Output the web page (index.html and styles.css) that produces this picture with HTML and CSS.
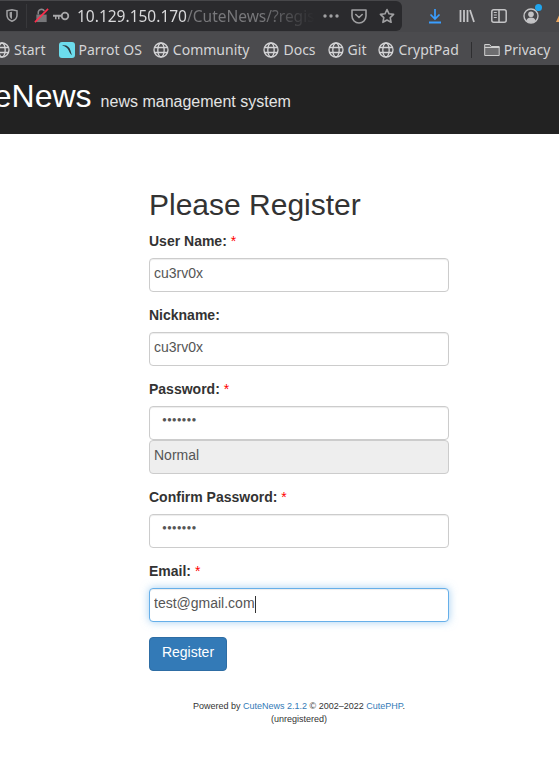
FILE: index.html
```html
<!DOCTYPE html>
<html lang="en">
<head>
    <meta charset="UTF-8">
    <meta name="viewport" content="width=device-width, initial-scale=1.0">
    <title>CuteNews - Register</title>
    <link rel="stylesheet" href="styles.css">
</head>
<body>
    <svg class="sprites" width="0" height="0">
        <symbol id="globe" viewBox="0 0 16 16">
            <g fill="none" stroke="currentColor" stroke-width="1.3">
                <circle cx="8" cy="8" r="7"/>
                <ellipse cx="8" cy="8" rx="3.2" ry="7"/>
                <path d="M1.5 5.5h13M1.5 10.5h13"/>
            </g>
        </symbol>
    </svg>

    <div class="nav-toolbar">
        <div class="url-field">
            <svg class="icon shield" viewBox="0 0 12 13"><path d="M1 1.8 6 .8l5 1v4.4c0 3-2.2 5-5 6-2.8-1-5-3-5-6z" fill="none" stroke="currentColor" stroke-width="1.5"/><path d="M3.6 3.2 6 2.7v7.4C4.400 9.300 3.600 8 3.600 6.200z" fill="currentColor"/></svg>
            <span class="url-divider"></span>
            <svg class="icon lock" viewBox="0 0 16 16"><path d="M4.500 7V5a3.500 3.500 0 0 1 6.500-1.800" fill="none" stroke="#8a8a8c" stroke-width="1.600"/><path d="M2.500 7h11v8h-11z" fill="#77777a"/><path d="M1 15 15 1" stroke="#ff2e4c" stroke-width="1.800"/></svg>
            <svg class="icon key" viewBox="0 0 17 10"><circle cx="12" cy="5" r="3.300" fill="none" stroke="currentColor" stroke-width="1.800"/><path d="M0 3.800h9v2H6.500v2.400H5V5.800H3.500v2.400H2V5.800H0z" fill="currentColor"/></svg>
            <span class="url-text"><span class="url-host">10.129.150.170</span>/CuteNews/?register</span>
            <svg class="icon dots" viewBox="0 0 16 4"><circle cx="2" cy="2" r="1.700"/><circle cx="8" cy="2" r="1.700"/><circle cx="14" cy="2" r="1.700"/></svg>
            <svg class="icon pocket" viewBox="0 0 16 16"><path d="M1 2h14v6a7 7 0 0 1-14 0z" fill="none" stroke="currentColor" stroke-width="1.600" stroke-linejoin="round"/><path d="m4.800 6.500 3.200 3 3.200-3" fill="none" stroke="currentColor" stroke-width="1.600" stroke-linecap="round"/></svg>
            <svg class="icon star" viewBox="0 0 16 16"><path d="m8 1.500 2 4.300 4.600.6-3.400 3.200.9 4.700L8 12l-4.100 2.300.9-4.700L1.400 6.400 6 5.800z" fill="none" stroke="currentColor" stroke-width="1.600" stroke-linejoin="round"/></svg>
        </div>
        <div class="toolbar-buttons">
            <svg class="icon download" viewBox="0 0 14 16"><path d="M7 1v9.500M2.500 6.500 7 11l4.500-4.500" fill="none" stroke="currentColor" stroke-width="1.700"/><path d="M1 14.500h12" stroke="currentColor" stroke-width="2"/></svg>
            <svg class="icon library" viewBox="0 0 16 14"><path d="M1.500 1v12M5 1v12M8.500 1v12M11 1l4 12" fill="none" stroke="currentColor" stroke-width="1.800"/></svg>
            <svg class="icon sidebar" viewBox="0 0 16 14"><rect x=".8" y=".8" width="14.400" height="12.400" rx="2" fill="none" stroke="currentColor" stroke-width="1.500"/><path d="M8 1v12" stroke="currentColor" stroke-width="1.500"/><path d="M2.800 3.500h3M2.800 6h3M2.800 8.500h3" stroke="currentColor" stroke-width="1"/></svg>
            <span class="account">
                <svg class="icon" viewBox="0 0 16 16"><circle cx="8" cy="8" r="7" fill="none" stroke="currentColor" stroke-width="1.400"/><circle cx="8" cy="6.300" r="2.800" fill="currentColor"/><path d="M3.200 13c.6-2.500 2.500-3.500 4.800-3.500s4.200 1 4.800 3.500a7 7 0 0 1-9.600 0z" fill="currentColor"/></svg>
                <span class="account-dot"></span>
            </span>
            <svg class="icon extension" viewBox="0 0 16 16"><path d="M1 14 6 3l6 5-5 6z" fill="#e8a45c"/></svg>
        </div>
    </div>

    <div class="bookmarks">
        <a class="bookmark bookmark-start"><svg class="icon"><use href="#globe"/></svg>Start</a>
        <a class="bookmark bookmark-parrot">
            <svg class="icon" viewBox="0 0 16 16"><rect width="16" height="16" rx="3" fill="#6cdcec"/><path d="M3 3.500c4-1 7.500 1 8.500 5 .4 1.500.8 3 1.500 4.800-1.500-1.300-2.500-3-3.200-4.600C9 6 6.500 4.500 3 3.500z" fill="#2b3a42"/></svg>
            Parrot OS
        </a>
        <a class="bookmark bookmark-community"><svg class="icon"><use href="#globe"/></svg>Community</a>
        <a class="bookmark"><svg class="icon"><use href="#globe"/></svg>Docs</a>
        <a class="bookmark"><svg class="icon"><use href="#globe"/></svg>Git</a>
        <a class="bookmark"><svg class="icon"><use href="#globe"/></svg>CryptPad</a>
        <span class="bookmark-sep"></span>
        <a class="bookmark">
            <svg class="icon" viewBox="0 0 16 16"><path d="M.7 13.500V2.500h5l1.500 2h8v9z" fill="#6e6e70" stroke="#cfcfcf" stroke-width="1"/><path d="M.7 5.500h14.600" stroke="#cfcfcf" stroke-width="1"/></svg>
            Privacy
        </a>
    </div>

    <header class="navbar">
        <span class="brand">CuteNews</span>
        <span class="brand-sub">news management system</span>
    </header>

    <main class="register">
        <h2>Please Register</h2>
        <form>
            <div class="form-group">
                <label for="regusername">User Name: <span class="required">*</span></label>
                <input class="form-control" id="regusername" type="text" value="cu3rv0x">
            </div>
            <div class="form-group">
                <label for="regnickname">Nickname:</label>
                <input class="form-control" id="regnickname" type="text" value="cu3rv0x">
            </div>
            <div class="form-group">
                <label for="regpassword">Password: <span class="required">*</span></label>
                <input class="form-control password" id="regpassword" type="password" value="1234567">
                <div class="pass-strength">Normal</div>
            </div>
            <div class="form-group">
                <label for="confirm">Confirm Password: <span class="required">*</span></label>
                <input class="form-control password" id="confirm" type="password" value="1234567">
            </div>
            <div class="form-group">
                <label for="regemail">Email: <span class="required">*</span></label>
                <div class="caret-field">
                    <input class="form-control focused" id="regemail" type="text" value="test@gmail.com">
                    <span class="caret"></span>
                </div>
            </div>
            <button class="btn-register" type="button">Register</button>
        </form>
        <footer class="powered">
            Powered by <a>CuteNews 2.1.2</a> © 2002–2022 <a>CutePHP</a>.<br>
            <span>(unregistered)</span>
        </footer>
    </main>
</body>
</html>
```

FILE: styles.css
```css
* {
    box-sizing: border-box;
}

html, body {
    height: 100%;
}

body {
    margin: 0;
    background: #fff;
    color: #333;
    font-family: "Liberation Sans", Arial, sans-serif;
    font-size: 14px;
    line-height: 20px;
    overflow: hidden;
}

.sprites {
    display: block;
    height: 0;
}

.icon {
    display: block;
    flex: none;
    width: 16px;
    height: 16px;
}

/* Browser chrome */
.nav-toolbar {
    display: flex;
    align-items: center;
    height: 32px;
    padding-bottom: 1px;
    background: #47474a;
    color: #c4c4c6;
}

.url-field {
    display: flex;
    align-items: center;
    flex: none;
    width: 402px;
    height: 30px;
    padding-left: 6px;
    background: #2a2a2d;
    border-radius: 0 6px 6px 0;
    color: #a0a0a2;
    font-family: "Noto Sans", sans-serif;
}

.shield {
    width: 12px;
    height: 13px;
}

.url-divider {
    width: 1px;
    height: 24px;
    margin: 0 7px 0 8px;
    background: #38383b;
}

.lock {
    width: 15px;
    height: 15px;
}

.key {
    width: 17px;
    height: 10px;
    margin-left: 4px;
    color: #a8a8aa;
}

.url-text {
    width: 238px;
    margin-left: 7px;
    overflow: hidden;
    white-space: nowrap;
    font-size: 15.5px;
    color: #77777a;
    -webkit-mask-image: linear-gradient(to right, #000 78%, transparent 100%);
    mask-image: linear-gradient(to right, #000 78%, transparent 100%);
}

.url-host {
    color: #d8d8da;
}

.dots {
    width: 16px;
    height: 4px;
    margin-left: 8px;
    fill: #a0a0a2;
}

.pocket {
    margin-left: 12px;
}

.star {
    margin-left: 12px;
}

.toolbar-buttons {
    display: flex;
    align-items: center;
    gap: 16px;
    flex: none;
    margin-left: 26px;
}

.download {
    width: 14px;
    margin-right: 1px;
    color: #3a9eff;
}

.library,
.sidebar {
    width: 16px;
    height: 14px;
}

.account {
    position: relative;
}

.account-dot {
    position: absolute;
    top: -4px;
    right: -3px;
    width: 7px;
    height: 7px;
    border-radius: 50%;
    background: #1fa5ee;
}

.bookmarks {
    display: flex;
    align-items: center;
    gap: 12px;
    height: 33px;
    padding-top: 2px;
    margin-left: -6px;
    background: #4b4b4e;
    color: #d4d4d6;
    font-family: "Noto Sans", sans-serif;
    font-size: 14px;
    white-space: nowrap;
}

.bookmark {
    display: flex;
    align-items: center;
    gap: 4px;
}

.bookmark-start {
    margin-right: 2px;
}

.bookmark-parrot {
    gap: 3px;
    margin-right: -1px;
}

.bookmark-community {
    margin-right: 2px;
}

.bookmark-sep {
    width: 1px;
    height: 16px;
    background: #2e2e30;
}

/* Site header */
.navbar {
    display: flex;
    align-items: baseline;
    height: 69px;
    padding-top: 9px;
    background: #222;
    color: #fff;
    white-space: nowrap;
}

.brand {
    margin-left: -56px;
    font-size: 32px;
    line-height: 44px;
}

.brand-sub {
    margin-left: 9px;
    font-size: 16px;
    color: #e4e4e4;
}

/* Register form */
.register {
    width: 300px;
    margin-left: 149px;
}

.register h2 {
    margin: 54px 0 12px;
    font-size: 30px;
    font-weight: 500;
    line-height: 33px;
}

.form-group {
    margin-bottom: 15px;
}

label {
    display: block;
    margin-bottom: 9px;
    font-weight: 700;
    line-height: 16px;
}

.required {
    color: #f00;
    font-weight: 400;
}

.form-control,
.pass-strength {
    display: block;
    width: 100%;
    height: 34px;
    padding: 4px 4px 8px;
    border: 1px solid #ccc;
    border-radius: 4px;
    font: inherit;
    color: #555;
}

.form-control {
    background: #fff;
    box-shadow: inset 0 1px 1px rgba(0,0,0,0.075);
    outline: none;
}

.form-control.password {
    padding: 4px 12px 8px;
    font-family: "Liberation Serif", serif;
}

.form-control.focused {
    border-color: #66afe9;
    box-shadow: inset 0 1px 1px rgba(0,0,0,0.075), 0 0 8px rgba(102,175,233,0.6);
}

.pass-strength {
    background: #eee;
}

.caret-field {
    position: relative;
}

.caret {
    position: absolute;
    top: 8px;
    left: 106px;
    width: 1px;
    height: 17px;
    background: #333;
}

.btn-register {
    display: block;
    width: 78px;
    height: 34px;
    margin-bottom: 29px;
    padding: 0 0 4px;
    border: 1px solid #2e6da4;
    border-radius: 4px;
    background: #337ab7;
    color: #fff;
    font: inherit;
}

.powered {
    font-size: 9px;
    line-height: 13px;
    text-align: center;
    color: #333;
}

.powered a {
    color: #337ab7;
}
```
